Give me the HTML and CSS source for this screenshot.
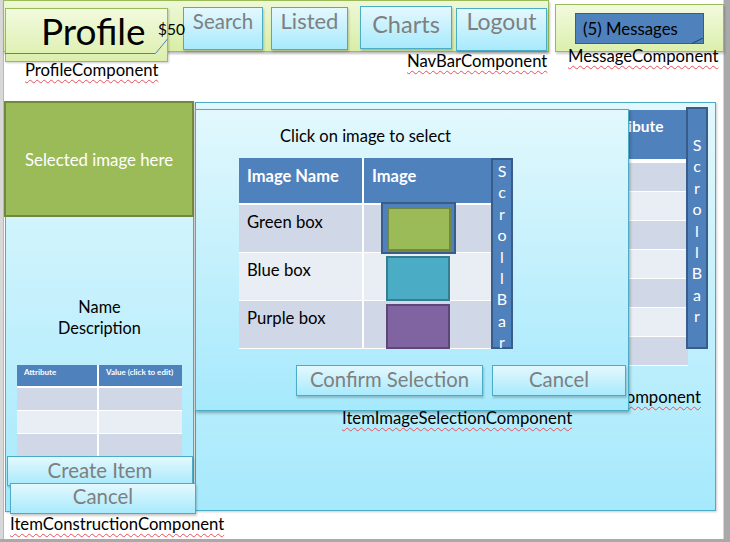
FILE: index.html
```html
<!DOCTYPE html>
<html>
<head>
<meta charset="utf-8">
<link rel="stylesheet" href="styles.css">
</head>
<body>
<div class="slide">
  <div class="edge-left"></div>

  <!-- Navbar -->
  <div class="navbar">
    <div class="nav-buttons">
      <div class="btn nav-btn b-search">Search</div>
      <div class="btn nav-btn b-listed">Listed</div>
      <div class="btn nav-btn b-charts">Charts</div>
      <div class="btn nav-btn b-logout">Logout</div>
    </div>
  </div>
  <div class="profile">
    <span class="profile-title">Profile</span>
    <svg class="fold" width="164" height="55" viewBox="0 0 164 55"><polyline points="0,45.5 150.5,45.5 162.5,31" fill="none" stroke="#4f81bd" stroke-width="1"/></svg>
  </div>
  <span class="money">$50</span>
  <span class="label l-profile">ProfileComponent</span>
  <span class="label l-nav">NavBarComponent</span>

  <div class="message">
    <div class="msg-box">(5) Messages
      <svg class="msg-fold" width="14" height="6" viewBox="0 0 14 6"><line x1="2" y1="5.5" x2="13" y2="0" stroke="#26405f" stroke-width="1"/></svg>
    </div>
  </div>
  <span class="label l-msg">MessageComponent</span>

  <!-- Back component -->
  <div class="cyan back">
    <div class="back-table">
      <div class="back-head"><span class="bh-a"></span><span class="bh-b">Attribute</span></div>
      <div class="back-row r1"></div>
      <div class="back-row r2"></div>
      <div class="back-row r1"></div>
      <div class="back-row r2"></div>
      <div class="back-row r1"></div>
      <div class="back-row r2"></div>
      <div class="back-row r1"></div>
    </div>
    <div class="scroll big"><span>S</span><span>c</span><span>r</span><span>o</span><span>l</span><span>l</span><span>B</span><span>a</span><span>r</span></div>
    <span class="label l-back">ItemListComponent</span>
  </div>

  <!-- Image selection -->
  <div class="cyan select">
    <div class="select-title">Click on image to select</div>
    <div class="img-area">
      <div class="img-table">
        <div class="it-row it-head"><div class="c1">Image Name</div><div class="c2">Image</div></div>
        <div class="it-row r1"><div class="c1">Green box</div><div class="c2"><div class="sel"><div class="swatch green"></div></div></div></div>
        <div class="it-row r2"><div class="c1">Blue box</div><div class="c2"><div class="swatch blue"></div></div></div>
        <div class="it-row r1"><div class="c1">Purple box</div><div class="c2"><div class="swatch purple"></div></div></div>
      </div>
      <div class="scroll small"><span>S</span><span>c</span><span>r</span><span>o</span><span>l</span><span>l</span><span>B</span><span>a</span><span>r</span></div>
    </div>
    <div class="select-actions">
      <div class="btn act-btn b-confirm">Confirm Selection</div>
      <div class="btn act-btn b-cancel2">Cancel</div>
    </div>
  </div>
  <span class="label l-select">ItemImageSelectionComponent</span>

  <!-- Construction -->
  <div class="cyan construct">
    <div class="selected-img">Selected image here</div>
    <div class="name-desc">Name<br>Description</div>
    <div class="mini-table">
      <div class="mt-row mt-head"><div>Attribute</div><div>Value (click to edit)</div></div>
      <div class="mt-row r1"><div></div><div></div></div>
      <div class="mt-row r2"><div></div><div></div></div>
      <div class="mt-row r1"><div></div><div></div></div>
    </div>
  </div>
  <div class="btn btn-create">Create Item</div>
  <div class="btn btn-cancel1">Cancel</div>
  <span class="label l-construct">ItemConstructionComponent</span>
</div>
</body>
</html>
```

FILE: styles.css
```css
* { box-sizing: border-box; }
html, body { margin: 0; padding: 0; }
body {
  width: 730px; height: 542px; overflow: hidden;
  background: #a9a9a9;
  font-family: Lato, "Open Sans", sans-serif;
}
.slide {
  position: relative;
  width: 724px; height: 539px;
  background: #fff;
  border-right: 1px solid #d6d6d6;
}
.edge-left {
  position: absolute; left: 0; top: 0; width: 4px; height: 539px;
  background: #d8d8d8; border-right: 1px solid #b8b8b8;
}
.label {
  position: absolute;
  font-size: 16.7px; color: #000; white-space: nowrap; line-height: 18px;
  text-decoration: underline wavy #e8505b;
  text-decoration-thickness: 1px;
  text-underline-offset: 3px;
}

/* Navbar */
.navbar {
  position: absolute; left: 3px; top: 0; width: 546px; height: 52px;
  background: linear-gradient(#eef8d8, #d8eea6);
  border: 1px solid #9bbb59;
  box-shadow: 1px 2px 2px rgba(0,0,0,0.25);
}
.nav-buttons { display: flex; padding: 5px 0 0 179px; }
.btn {
  background: linear-gradient(#e4f8fe, #a8eafc);
  border: 1px solid #4bacc6;
  box-shadow: 1px 2px 2px rgba(0,0,0,0.2);
  color: #7f7f7f;
  text-align: center;
  white-space: nowrap;
}
.nav-btn { height: 43px; line-height: 26px; }
.b-search { width: 80px; font-size: 20.5px; margin-top: 1px; }
.b-listed { width: 77px; font-size: 22px; margin-left: 8px; margin-top: 1px; }
.b-charts { width: 92px; font-size: 23.5px; margin-left: 12px; line-height: 34px; }
.b-logout { width: 91px; font-size: 23px; margin-left: 4px; margin-top: 2px; line-height: 24px; }

.profile {
  position: absolute; left: 5px; top: 8px; width: 163px; height: 54px;
  background: linear-gradient(#f2fadf, #dcefac);
  border: 1px solid #9bbb59;
  box-shadow: 1px 1px 2px rgba(0,0,0,0.2);
}
.profile-title {
  position: absolute; left: 35px; top: 1px; font-size: 37px; line-height: 42px; color: #000;
}
.fold { position: absolute; left: -1px; top: -1px; }
.money { position: absolute; left: 158px; top: 20px; font-size: 15.5px; line-height: 18px; }
.l-profile { left: 25px; top: 61px; }
.l-nav { left: 407px; top: 52px; }

.message {
  position: absolute; left: 555px; top: 4px; width: 169px; height: 48px;
  background: linear-gradient(#f2fadf, #dcefac);
  border: 1px solid #9bbb59;
  box-shadow: 1px 2px 2px rgba(0,0,0,0.2);
  padding: 8px 0 0 19px;
}
.msg-box {
  position: relative;
  width: 129px; height: 31px;
  background: #4f81bd; border: 1px solid #385d8a;
  font-size: 16.8px; line-height: 29px; padding-left: 7px; color: #000;
}
.msg-fold { position: absolute; right: -1px; bottom: -1px; }
.l-msg { left: 568px; top: 47px; }

/* cyan panels */
.cyan {
  position: absolute;
  background: linear-gradient(#e2f8fd, #a6e9fc);
  border: 1px solid #4bacc6;
  box-shadow: 1px 1px 2px rgba(0,0,0,0.2);
}
.back { left: 195px; top: 102px; width: 521px; height: 409px; }
.back-table {
  position: absolute; left: 205px; top: 7px; width: 287px;
  display: flex; flex-direction: column;
}
.back-head {
  background: #4f81bd; display: flex;
  color: #fff; font-weight: bold; font-size: 15.5px; padding-top: 7px;
  border-bottom: 4px solid #fff; height: 53px;
}
.bh-a { width: 193px; }
.bh-b { padding-left: 7px; }
.back-row { height: 29px; border-bottom: 1px solid #fff; }
.r1 { background: #d0d8e8; }
.r2 { background: #e9edf4; }
.scroll {
  background: #4f81bd; border: 2px solid #385d8a;
  display: flex; flex-direction: column; align-items: center;
  color: #fff; font-size: 16px;
}
.scroll span { display: block; height: 21.4px; line-height: 21.4px; }
.scroll.big {
  position: absolute; left: 490px; top: 4px; width: 22px; height: 242px;
  padding-top: 25px;
}
.l-back { right: 14px; top: 285px; }

.select { left: 195px; top: 109px; width: 434px; height: 302px; z-index: 2; box-shadow: 1px 2px 3px rgba(0,0,0,0.3); }
.select-title { font-size: 16.5px; line-height: 20px; padding: 16px 0 0 84px; }
.img-area { display: flex; margin: 12px 0 0 43px; align-items: flex-start; }
.img-table { width: 252px; display: flex; flex-direction: column; }
.it-row { display: flex; height: 48px; border-bottom: 1px solid #fff; }
.it-row .c1 { width: 125px; border-right: 2px solid #fff; padding: 7px 0 0 8px; font-size: 16.7px; line-height: 20px; }
.it-row .c2 { flex: 1; position: relative; padding: 8px 0 0 8px; }
.it-head { background: #4f81bd; color: #fff; font-weight: bold; border-bottom: 2px solid #fff; height: 47px; }
.it-head .c1, .it-head .c2 { font-size: 16.5px; line-height: 20px; padding-top: 8px; }
.swatch { width: 64px; height: 45px; border: 2px solid; }
.green { background: #9bbb59; border-color: #71893f; width: 64px; height: 44px; }
.blue { background: #4bacc6; border-color: #357d91; margin: -5px 0 0 14px; }
.purple { background: #8064a2; border-color: #5c4776; margin: -5px 0 0 14px; width: 64px; height: 45px; }
.sel {
  position: absolute; left: 17px; top: -3px;
  width: 75px; height: 52px;
  background: #4f81bd; border: 2px solid #385d8a; padding: 3px 0 0 4px;
}
.scroll.small { width: 22px; height: 191px; padding-top: 0; }
.select-actions { display: flex; gap: 9px; margin: 16px 0 0 100px; }
.act-btn { height: 31px; font-size: 20.3px; line-height: 27px; }
.b-confirm { width: 187px; }
.b-cancel2 { width: 134px; }
.l-select { left: 342px; top: 409px; z-index: 3; }

.construct { left: 5px; top: 101px; width: 189px; height: 411px; }
.selected-img {
  height: 116px; margin: -1px -1px 0 -2px;
  background: #9bbb59; border: 2px solid #71893f;
  color: #fff; font-size: 16.8px; text-align: center; line-height: 114px;
}
.name-desc { text-align: center; font-size: 16.3px; line-height: 21px; margin-top: 79px; }
.mini-table { margin: 27px 0 0 11px; width: 165px; display: flex; flex-direction: column; }
.mt-row { display: flex; height: 23px; border-bottom: 1px solid #fff; }
.mt-row > div { width: 82px; border-right: 2px solid #fff; }
.mt-row > div + div { flex: 1; border-right: none; }
.mt-head { background: #4f81bd; color: #fff; font-weight: bold; font-size: 8px; line-height: 14px; border-bottom: 2px solid #fff; }
.mt-head > div { padding-left: 7px; }
.btn-create {
  position: absolute; left: 7px; top: 456px; width: 186px; height: 30px;
  font-size: 20.4px; line-height: 26px;
}
.btn-cancel1 {
  position: absolute; left: 10px; top: 483px; width: 186px; height: 31px;
  font-size: 20.4px; line-height: 25px;
}
.l-construct { left: 10px; top: 515px; }
```
